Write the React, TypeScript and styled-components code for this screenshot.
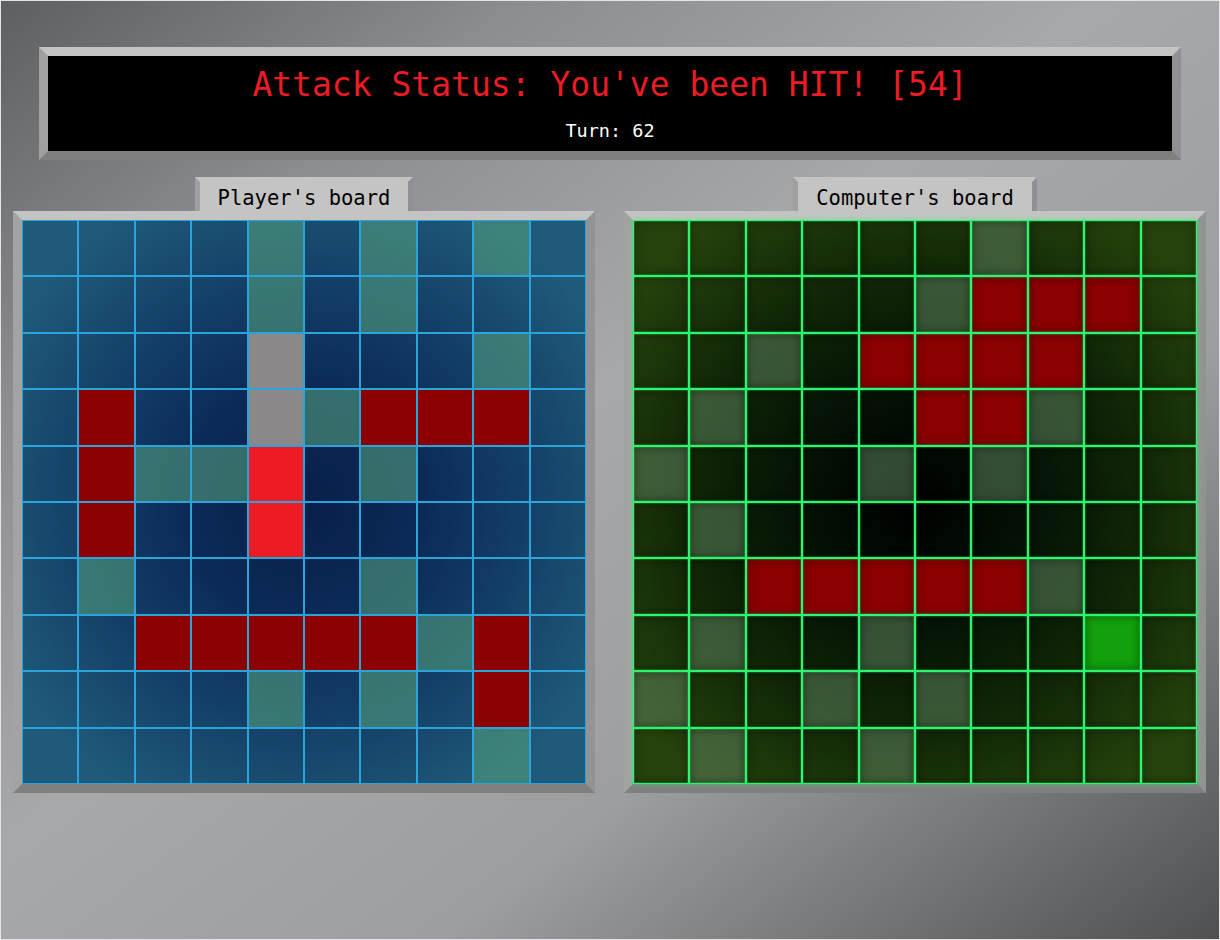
import React from "react";
import styled, { createGlobalStyle } from "styled-components";

const GlobalStyle = createGlobalStyle`
  html, body {
    margin: 0;
    padding: 0;
    background: #e6e6e6;
  }
`;

const Page = styled.div`
  width: 1220px;
  height: 940px;
  box-sizing: border-box;
  border: 1px solid #e4e4e4;
  background: linear-gradient(
    to bottom right,
    #5e5f63 0%,
    #8c8e92 22%,
    #a6a8ac 45%,
    #9c9ea1 68%,
    #4f5052 100%
  );
  font-family: "DejaVu Sans Mono", "Liberation Mono", monospace;
  overflow: hidden;
`;

const StatusPanel = styled.header`
  margin: 46px 38px 0 38px;
  border: 9px solid;
  border-color: #c4c4c4 #909090 #7f7f7f #a0a0a0;
  background: #000;
  text-align: center;
  padding: 9px 0 9px;
`;

const StatusTitle = styled.div`
  color: #ed1c24;
  font-size: 33px;
  line-height: 40px;
`;

const TurnLine = styled.div`
  color: #fff;
  font-size: 18.5px;
  line-height: 22px;
  margin-top: 15px;
`;

const Boards = styled.main`
  display: flex;
  gap: 29px;
  padding-left: 12px;
  margin-top: 17px;
`;

const BoardColumn = styled.section`
  display: flex;
  flex-direction: column;
  align-items: center;
`;

const Tab = styled.div`
  border: 5px solid;
  border-bottom: 0;
  border-color: #c4c4c4 #909090 transparent #a0a0a0;
  background: #c4c4c4;
  padding: 4px 18px 1px;
  font-size: 20.5px;
  line-height: 24px;
  color: #000;
`;

const Frame = styled.div`
  width: 582px;
  box-sizing: border-box;
  border: 9px solid;
  border-color: #c4c4c4 #939393 #808080 #a3a3a3;
`;

type Kind = "player" | "computer";

const Grid = styled.div<{ $kind: Kind }>`
  display: grid;
  grid-template-columns: repeat(10, 1fr);
  background: ${(p) =>
    p.$kind === "player"
      ? "radial-gradient(circle at 50% 50%, #081f4a 0%, #0b2b56 30%, #133f66 55%, #1f5a7a 85%)"
      : "radial-gradient(circle at 50% 50%, #000000 0%, #031005 25%, #0f2506 55%, #26420c 88%)"};
  box-shadow: ${(p) =>
    p.$kind === "computer" ? "0 0 6px rgba(46, 245, 110, 0.5)" : "none"};
`;

const cellFill: Record<string, string> = {
  ".": "transparent",
  m: "rgba(85, 160, 125, 0.58)",
  s: "#8a8888",
  h: "#ed1c24",
  x: "#8b0000",
};

const computerFill: Record<string, string> = {
  ".": "transparent",
  m: "rgba(92, 130, 92, 0.55)",
  x: "#8b0000",
  c: "#12a00c",
};

const PlayerCell = styled.div<{ $state: string }>`
  aspect-ratio: 1;
  border: 1px solid #2aa4da;
  background: ${(p) => cellFill[p.$state]};
`;

const ComputerCell = styled.div<{ $state: string }>`
  aspect-ratio: 1;
  border: 1px solid #2ef56e;
  background: ${(p) => computerFill[p.$state]};
  box-shadow: inset 0 0 2px rgba(46, 245, 110, 0.9),
    inset 0 0 8px rgba(0, 0, 0, 0.5);
`;

const playerBoard = [
  "....m.m.m.",
  "....m.m...",
  "....s...m.",
  ".x..smxxx.",
  ".xmmh.m...",
  ".x..h.....",
  ".m....m...",
  "..xxxxxmx.",
  "....m.m.x.",
  "........m.",
];

const computerBoard = [
  "......m...",
  ".....mxxx.",
  "..m.xxxx..",
  ".m...xxm..",
  "m...m.m...",
  ".m........",
  "..xxxxxm..",
  ".m..m...c.",
  "m..m.m....",
  ".m..m.....",
];

const App: React.FC = () => {
  return (
    <Page>
      <GlobalStyle />
      <StatusPanel>
        <StatusTitle>Attack Status: You've been HIT! [54]</StatusTitle>
        <TurnLine>Turn: 62</TurnLine>
      </StatusPanel>
      <Boards>
        <BoardColumn>
          <Tab>Player's board</Tab>
          <Frame>
            <Grid $kind="player">
              {playerBoard.map((row, r) =>
                row
                  .split("")
                  .map((s, c) => <PlayerCell key={`${r}-${c}`} $state={s} />)
              )}
            </Grid>
          </Frame>
        </BoardColumn>
        <BoardColumn>
          <Tab>Computer's board</Tab>
          <Frame>
            <Grid $kind="computer">
              {computerBoard.map((row, r) =>
                row
                  .split("")
                  .map((s, c) => (
                    <ComputerCell key={`${r}-${c}`} $state={s} />
                  ))
              )}
            </Grid>
          </Frame>
        </BoardColumn>
      </Boards>
    </Page>
  );
};

export default App;
